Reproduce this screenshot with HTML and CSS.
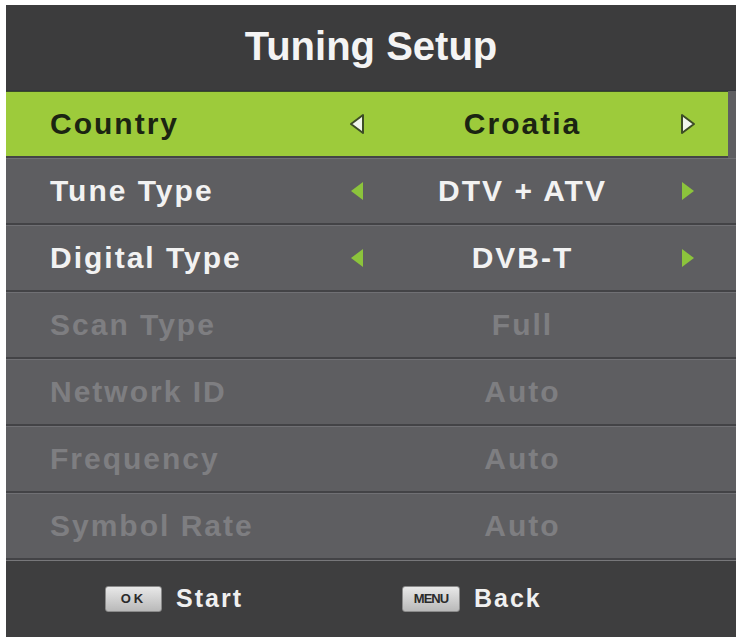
FILE: index.html
```html
<!DOCTYPE html>
<html>
<head>
<meta http-equiv="Content-Type" content="text/html; charset=UTF-8"/>
<title>Tuning Setup</title>
<link rel="stylesheet" href="styles.css">
</head>
<body>
<div class="panel">
	<div class="header"><h1>Tuning Setup</h1></div>

	<div class="list">
		<!-- selected row -->
		<div class="row selected">
			<div class="label">Country</div>
			<div class="arrow"><svg width="20" height="24" viewBox="0 0 20 24"><polygon points="16,3 16,21 4,12" class="tri"/></svg></div>
			<div class="value">Croatia</div>
			<div class="arrow"><svg width="20" height="24" viewBox="0 0 20 24"><polygon points="4,3 4,21 16,12" class="tri"/></svg></div>
		</div>
		<div class="row">
			<div class="label">Tune Type</div>
			<div class="arrow"><svg width="20" height="24" viewBox="0 0 20 24"><polygon points="16,3 16,21 4,12" class="tri"/></svg></div>
			<div class="value">DTV + ATV</div>
			<div class="arrow"><svg width="20" height="24" viewBox="0 0 20 24"><polygon points="4,3 4,21 16,12" class="tri"/></svg></div>
		</div>
		<div class="row">
			<div class="label">Digital Type</div>
			<div class="arrow"><svg width="20" height="24" viewBox="0 0 20 24"><polygon points="16,3 16,21 4,12" class="tri"/></svg></div>
			<div class="value">DVB-T</div>
			<div class="arrow"><svg width="20" height="24" viewBox="0 0 20 24"><polygon points="4,3 4,21 16,12" class="tri"/></svg></div>
		</div>

		<!-- greyed out until manual scan -->
		<div class="row disabled">
			<div class="label">Scan Type</div>
			<div class="arrow"></div>
			<div class="value">Full</div>
			<div class="arrow"></div>
		</div>
		<div class="row disabled">
			<div class="label">Network ID</div>
			<div class="arrow"></div>
			<div class="value">Auto</div>
			<div class="arrow"></div>
		</div>
		<div class="row disabled">
			<div class="label">Frequency</div>
			<div class="arrow"></div>
			<div class="value">Auto</div>
			<div class="arrow"></div>
		</div>
		<div class="row disabled">
			<div class="label">Symbol Rate</div>
			<div class="arrow"></div>
			<div class="value">Auto</div>
			<div class="arrow"></div>
		</div>
	</div>

	<div class="footer">
		<div class="hint first"><span class="key ok">OK</span><span class="hintText">Start</span></div>
		<div class="hint"><span class="key menu">MENU</span><span class="hintText">Back</span></div>
	</div>
</div>
</body>
</html>
```

FILE: styles.css
```css
		body {
			font-family: "Liberation Sans", Arial, Helvetica, sans-serif;
			padding: 0px;
			margin: 0px;
			background: #FFFFFF;
		}

		.panel {
			width: 730px;
			margin: 5px 4px 0px 6px;
			background: #5e5e61;
		}

		.header {
			height: 85px;
			background: #3c3c3d;
			display: flex;
			align-items: center;
			justify-content: center;
			border-bottom: 1px solid #34363d;
		}

		h1 {
			margin: 0px;
			padding-bottom: 2px;
			font-size: 40px;
			font-weight: bold;
			color: #f4f4f4;
		}

		.row {
			height: 64px;
			display: grid;
			grid-template-columns: 287px 40px 291px 40px;
			align-items: center;
			padding: 0px 28px 0px 44px;
			border-top: 1px solid #707074;
			border-bottom: 2px solid #434346;
			font-size: 30px;
			font-weight: bold;
			letter-spacing: 2px;
			color: #f2f2f2;
		}

		.row.selected {
			background: #9dcb3b;
			color: #1b2412;
			margin-right: 8px;
			padding-right: 20px;
			border-top: 1px solid #3a4a2a;
		}

		.row.disabled {
			color: #7e7e81;
		}

		.value {
			text-align: center;
		}

		.arrow {
			display: flex;
			justify-content: center;
			align-items: center;
		}

		.arrow svg {
			display: block;
		}

		.tri {
			fill: #8cc43c;
		}

		.selected .tri {
			fill: #f2f6ec;
			stroke: #3d4d26;
			stroke-width: 2;
			stroke-linejoin: round;
		}

		.footer {
			height: 75px;
			background: #3e3e3f;
			border-top: 1px solid #77777a;
			display: flex;
			align-items: center;
			padding-left: 99px;
			padding-bottom: 3px;
		}

		.hint {
			display: flex;
			align-items: center;
		}

		.hint.first {
			width: 297px;
		}

		.key {
			display: inline-block;
			height: 24px;
			line-height: 24px;
			border-radius: 3px;
			background: linear-gradient(#e8e8e8, #b9b9b9);
			border: 1px solid #8a8a8a;
			color: #2a2a2a;
			text-align: center;
			font-weight: bold;
		}

		.key.ok {
			width: 55px;
			font-size: 13px;
			letter-spacing: 3px;
		}

		.key.menu {
			width: 56px;
			font-size: 13px;
			letter-spacing: -1px;
		}

		.hintText {
			margin-left: 14px;
			font-size: 25px;
			font-weight: bold;
			letter-spacing: 2px;
			color: #f0f0f0;
		}
```
